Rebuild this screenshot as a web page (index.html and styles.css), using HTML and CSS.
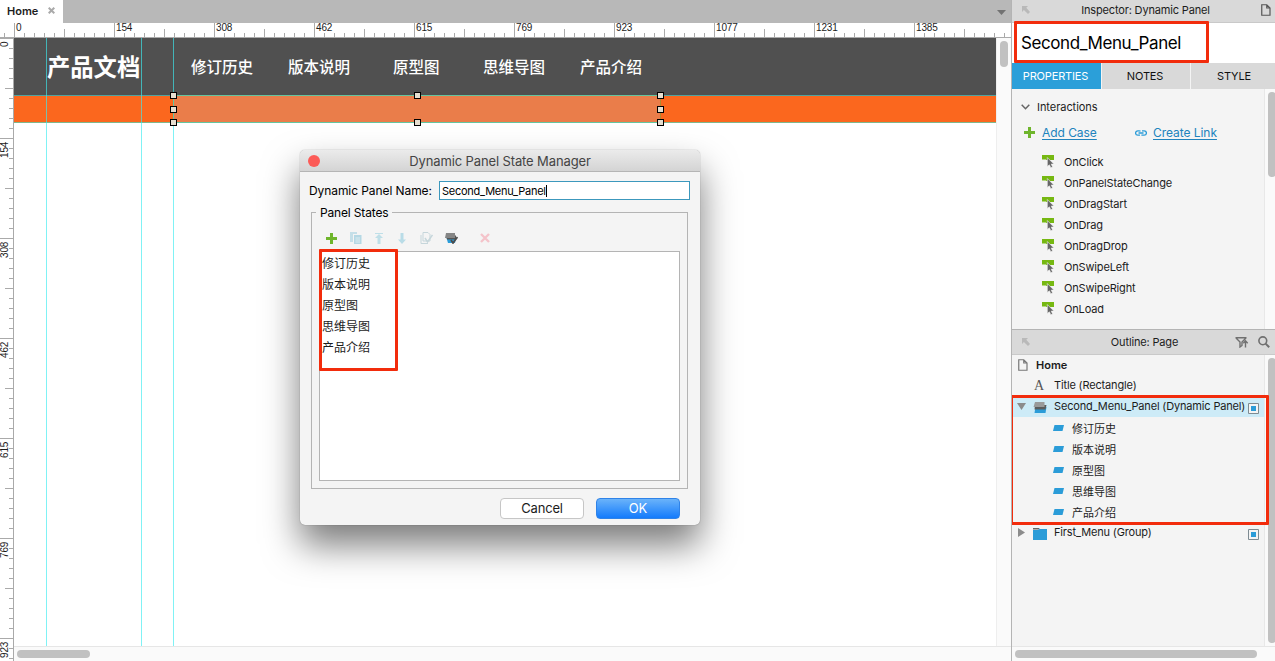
FILE: index.html
```
<!DOCTYPE html>
<html lang="zh">
<head>
    <meta charset="utf-8">
    <title>Home</title>
    <link rel="stylesheet" href="styles.css">
</head>
<body>
    <svg class="defs" width="0" height="0">
        <symbol id="icon-event" viewBox="0 0 13 13">
            <path d="M0 0h12v5H4V4.500H0z" fill="#76b812"/>
            <path d="M5.300 2.500v9l2.100-1.700 1.400 3 1.800-.8-1.400-2.900h2.700z" fill="#666" stroke="#f4f4f4" stroke-width=".6"/>
        </symbol>
        <symbol id="icon-corner" viewBox="0 0 8 8">
            <path d="M0 0h6L4.300 1.700 8 6 6 8 1.900 4 0 6z" fill="#b9b9b9"/>
        </symbol>
        <symbol id="icon-plus" viewBox="0 0 11 11">
            <path d="M4 0h3v4h4v3H7v4H4V7H0V4h4z" fill="#6fb52c"/>
        </symbol>
        <symbol id="icon-state" viewBox="0 0 11 6">
            <path d="M1.500 0H11L9.500 6H0z" fill="#2b9cd8"/>
        </symbol>
        <symbol id="icon-visible" viewBox="0 0 11 11">
            <path d="M.5.5h10v10H.5z" fill="#f4f4f4" stroke="#7e8b92"/>
            <path d="M3 3h5v5H3z" fill="#2b9cd8"/>
        </symbol>
        <symbol id="icon-page" viewBox="0 0 10 12">
            <path d="M.75.75h5L9 4v7.250H.75zM5.750.75V4H9" fill="none" stroke="currentColor" stroke-width="1.200"/>
        </symbol>
    </svg>

    <div class="app">
        <div class="editor">
            <div class="tabbar">
                <div class="tab">Home
                    <svg width="7" height="7" viewBox="0 0 7 7"><path d="M.7.7l5.600 5.600M6.300.7L.7 6.300" stroke="#aaa" stroke-width="2"/></svg>
                </div>
                <svg class="tab-menu" width="9" height="5" viewBox="0 0 9 5"><path d="M0 0h9L4.500 5z" fill="#727272"/></svg>
            </div>
            <div class="ruler-x">
                <span>0</span><span>154</span><span>308</span><span>462</span><span>615</span><span>769</span><span>923</span><span>1077</span><span>1231</span><span>1385</span>
            </div>
            <div class="workspace">
                <div class="ruler-y">
                    <span>0</span><span>154</span><span>308</span><span>462</span><span>615</span><span>769</span><span class="last">923</span>
                </div>
                <div class="view">
                    <div class="canvas">
                        <div class="site-header">
                            <div class="site-title">产品文档</div>
                            <div class="site-item item-history">修订历史</div>
                            <div class="site-item item-version">版本说明</div>
                            <div class="site-item item-proto">原型图</div>
                            <div class="site-item item-mind">思维导图</div>
                            <div class="site-item item-intro">产品介绍</div>
                        </div>
                        <div class="submenu"></div>
                        <div class="selection">
                            <i class="handle nw"></i><i class="handle n"></i><i class="handle ne"></i>
                            <i class="handle w"></i><i class="handle e"></i>
                            <i class="handle sw"></i><i class="handle s"></i><i class="handle se"></i>
                        </div>
                        <div class="guide guide-a"></div>
                        <div class="guide guide-b"></div>
                        <div class="guide guide-c"></div>
                    </div>
                    <div class="scroll-y"><div class="thumb"></div></div>
                    <div class="scroll-x"><div class="thumb"></div></div>
                </div>
            </div>
        </div>

        <div class="sidebar">
            <div class="pane-head inspector-head">
                <svg class="corner" width="8" height="8"><use href="#icon-corner"/></svg>
                <span class="pane-title">Inspector: Dynamic Panel</span>
                <svg class="head-page" width="10" height="12"><use href="#icon-page"/></svg>
            </div>
            <div class="widget-name">Second_Menu_Panel
                <div class="mark mark-name"></div>
            </div>
            <div class="tabs">
                <div class="tabs-item active">PROPERTIES</div>
                <div class="tabs-item">NOTES</div>
                <div class="tabs-item">STYLE</div>
            </div>
            <div class="properties">
                <div class="properties-body">
                    <div class="section-title">
                        <svg width="9" height="6" viewBox="0 0 9 6"><path d="M.7.7l3.800 4 3.800-4" fill="none" stroke="#666" stroke-width="1.500"/></svg>
                        <span>Interactions</span>
                    </div>
                    <div class="links">
                        <svg width="11" height="11"><use href="#icon-plus"/></svg>
                        <a class="add-case">Add Case</a>
                        <svg width="12" height="6" viewBox="0 0 12 6"><path d="M5.500 1.200A2 2 0 0 0 4 .8H2.800a2.200 2.200 0 0 0 0 4.400H5M6.500 4.800a2 2 0 0 0 1.500.4h1.200a2.200 2.200 0 0 0 0-4.400H7M3.500 3h5" fill="none" stroke="#2b9cd8" stroke-width="1.300"/></svg>
                        <a class="create-link">Create Link</a>
                    </div>
                    <ul class="events">
                        <li><svg width="13" height="13"><use href="#icon-event"/></svg>OnClick</li>
                        <li><svg width="13" height="13"><use href="#icon-event"/></svg>OnPanelStateChange</li>
                        <li><svg width="13" height="13"><use href="#icon-event"/></svg>OnDragStart</li>
                        <li><svg width="13" height="13"><use href="#icon-event"/></svg>OnDrag</li>
                        <li><svg width="13" height="13"><use href="#icon-event"/></svg>OnDragDrop</li>
                        <li><svg width="13" height="13"><use href="#icon-event"/></svg>OnSwipeLeft</li>
                        <li><svg width="13" height="13"><use href="#icon-event"/></svg>OnSwipeRight</li>
                        <li><svg width="13" height="13"><use href="#icon-event"/></svg>OnLoad</li>
                    </ul>
                </div>
                <div class="side-scroll"><div class="thumb thumb-props"></div></div>
            </div>
            <div class="pane-head outline-head">
                <svg class="corner" width="8" height="8"><use href="#icon-corner"/></svg>
                <span class="pane-title">Outline: Page</span>
                <svg class="head-filter" width="14" height="11" viewBox="0 0 14 11"><path d="M.5.7h11M1 1l4 4v5l2-1.500V5l4-4M10.500 10.500V4M8.300 6.200l2.200-2.400 2.200 2.400" fill="none" stroke="#707070" stroke-width="1.400"/></svg>
                <svg class="head-search" width="12" height="12" viewBox="0 0 12 12"><circle cx="4.800" cy="4.800" r="3.900" fill="none" stroke="#707070" stroke-width="1.600"/><path d="M7.600 7.600l3.600 3.600" stroke="#707070" stroke-width="2"/></svg>
            </div>
            <div class="outline">
                <div class="tree">
                    <div class="row row-home"><svg class="page" width="10" height="12"><use href="#icon-page"/></svg>Home</div>
                    <div class="row row-title"><span class="letter">A</span>Title (Rectangle)</div>
                    <div class="row row-widget selected">
                        <svg class="arrow" width="9" height="7" viewBox="0 0 9 7"><path d="M0 0h9L4.500 7z" fill="#8b8b8b"/></svg>
                        <svg class="kind" width="13" height="11" viewBox="0 0 13 11"><path d="M2 5h11l-1 6H1z" fill="#2b9cd8"/><path d="M1.500 3H13l-1 4.500H1z" fill="#5c5c5c"/><path d="M1.500 0H11v5H0z" fill="#9a9a9a"/></svg>
                        <span class="label">Second_Menu_Panel (Dynamic Panel)</span>
                        <svg class="eye" width="11" height="11"><use href="#icon-visible"/></svg>
                    </div>
                    <div class="row row-state"><svg width="11" height="6"><use href="#icon-state"/></svg>修订历史</div>
                    <div class="row row-state"><svg width="11" height="6"><use href="#icon-state"/></svg>版本说明</div>
                    <div class="row row-state"><svg width="11" height="6"><use href="#icon-state"/></svg>原型图</div>
                    <div class="row row-state"><svg width="11" height="6"><use href="#icon-state"/></svg>思维导图</div>
                    <div class="row row-state"><svg width="11" height="6"><use href="#icon-state"/></svg>产品介绍</div>
                    <div class="row row-widget">
                        <svg class="arrow" width="9" height="9" viewBox="0 0 9 9"><path d="M1 0l7 4.500L1 9z" fill="#8b8b8b"/></svg>
                        <svg class="kind" width="14" height="12" viewBox="0 0 14 12"><path d="M0 0h6l1 1.500H0z" fill="#666"/><path d="M0 2h5l1.500-1H14v11H0z" fill="#2b9cd8"/></svg>
                        <span class="label">First_Menu (Group)</span>
                        <svg class="eye" width="11" height="11"><use href="#icon-visible"/></svg>
                    </div>
                </div>
                <div class="side-scroll"><div class="thumb thumb-outline"></div></div>
                <div class="mark mark-tree"></div>
            </div>
            <div class="scroll-x side-scroll-x"><div class="thumb"></div></div>
        </div>
    </div>

    <!-- State manager window -->
    <div class="dialog">
        <div class="dialog-title"><i class="close"></i><span>Dynamic Panel State Manager</span></div>
        <div class="dialog-body">
            <div class="name-row">
                <label>Dynamic Panel Name:</label>
                <div class="name-input">Second_Menu_Panel<i class="caret"></i></div>
            </div>
            <div class="group">
                <span class="legend">Panel States</span>
                <div class="toolbar">
                    <svg width="11" height="11"><use href="#icon-plus"/></svg>
                    <svg width="12" height="12" viewBox="0 0 12 12"><path d="M0 0h7v2H3v8H0z" fill="#c5dfe8"/><path d="M4 3h7.500v9H4z" fill="#b5d8e4"/><path d="M5.500 6h4.500M5.500 8h4.500M5.500 10h4.500" stroke="#deedf1"/></svg>
                    <svg width="10" height="11" viewBox="0 0 10 11"><path d="M1 0h8v1H1zM5 1l4 4H6.500v6h-3V5H1z" fill="#bfdfe8"/></svg>
                    <svg width="10" height="11" viewBox="0 0 10 11"><path d="M5 11L1 6.500h2.500V0h3v6.500H9z" fill="#b9dce7"/></svg>
                    <svg width="13" height="12" viewBox="0 0 13 12"><path d="M3 .5h5l2 2V9H3zM1 3v8.500h7" fill="none" stroke="#c6d6db"/><path d="M5 6l2.500 4L12.500 3" fill="none" stroke="#c6d6db" stroke-width="1.500"/></svg>
                    <svg width="13" height="11" viewBox="0 0 13 11"><path d="M1.500 5H11l-1 5H3z" fill="#2b9cd8"/><path d="M1 2.500h10v4H2z" fill="#555"/><path d="M1 0h9v5H0z" fill="#858585"/><path d="M6 7l2 3 4.500-6" fill="none" stroke="#4c4c4c" stroke-width="1.800"/></svg>
                    <svg width="10" height="10" viewBox="0 0 10 10"><path d="M1 1l8 8M9 1L1 9" stroke="#f4c3ca" stroke-width="2.400"/></svg>
                </div>
                <ul class="states">
                    <li>修订历史</li>
                    <li>版本说明</li>
                    <li>原型图</li>
                    <li>思维导图</li>
                    <li>产品介绍</li>
                </ul>
                <div class="mark mark-states"></div>
            </div>
            <div class="buttons">
                <div class="btn">Cancel</div>
                <div class="btn btn-ok">OK</div>
            </div>
        </div>
    </div>
</body>
</html>
```
FILE: styles.css
```
* {
    box-sizing: border-box;
}

body {
    margin: 0;
    height: 661px;
    overflow: hidden;
    position: relative;
    font-family: Inter, "Noto Sans CJK SC", sans-serif;
    font-size: 11px;
    letter-spacing: -.16px;
    color: #1c1c1c;
    background: #fff;
    white-space: nowrap;
}

svg {
    display: block;
    flex: none;
}

ul {
    list-style: none;
    margin: 0;
    padding: 0;
}

.defs {
    position: absolute;
}

.app {
    display: flex;
    height: 661px;
}

/* editor */
.editor {
    width: 1011px;
    display: flex;
    flex-direction: column;
}

.tabbar {
    height: 23px;
    background: #b8b8b8;
    display: flex;
    justify-content: space-between;
}

.tab {
    width: 63px;
    background: #fff;
    padding: 0 0 2px 7px;
    display: flex;
    align-items: center;
    gap: 10px;
    font-weight: 600;
    font-size: 11px;
    letter-spacing: 0;
}

.tab-menu {
    margin: 10px 5px 0 0;
}

.ruler-x {
    height: 15px;
    padding-left: 14px;
    display: flex;
    overflow: hidden;
    border-bottom: 1px solid #aaa;
    font: 10px/10px "Liberation Sans", sans-serif;
    background-image: linear-gradient(90deg, #aaa 1px, transparent 1px), linear-gradient(90deg, #aaa 1px, transparent 1px), linear-gradient(90deg, #aaa 1px, transparent 1px);
    background-size: 100px 14px, 50px 8px, 10px 4px;
    background-position: 14px 0, 14px 6px, 14px 10px;
    background-repeat: repeat-x;
}

.ruler-x span {
    width: 100px;
    flex: none;
    padding-left: 2px;
}

.workspace {
    height: 623px;
    display: flex;
}

.ruler-y {
    width: 14px;
    border-right: 1px solid #aaa;
    overflow: hidden;
    font: 10px/9px "Liberation Sans", sans-serif;
    background-image: linear-gradient(#aaa 1px, transparent 1px), linear-gradient(#aaa 1px, transparent 1px), linear-gradient(#aaa 1px, transparent 1px);
    background-size: 13px 100px, 8px 50px, 4px 10px;
    background-position: 0 0, 5px 0, 9px 0;
    background-repeat: repeat-y;
}

.ruler-y span {
    display: block;
    height: 100px;
    width: 9px;
    padding-bottom: 4px;
    text-align: right;
    writing-mode: vertical-rl;
    transform: rotate(180deg);
}

.ruler-y .last {
    height: 23px;
}

.view {
    width: 997px;
    display: grid;
    grid-template-columns: 982px 15px;
    grid-template-rows: 608px 15px;
}

.canvas {
    position: relative;
}

.site-header {
    height: 57px;
    background: #505050;
    color: #fff;
    display: flex;
    align-items: center;
    padding: 0 0 1px 33px;
    font-family: "Noto Sans CJK SC", sans-serif;
    letter-spacing: 0;
}

.site-title {
    width: 144px;
    font-size: 23.300px;
    line-height: 34px;
    font-weight: 700;
}

.site-item {
    font-size: 15.500px;
    font-weight: 500;
}

.item-history {
    width: 97px;
}

.item-version {
    width: 105px;
}

.item-proto {
    width: 90px;
}

.item-mind {
    width: 97px;
}

.submenu {
    height: 28px;
    background: #fb671e;
    border-top: 1px solid #4fa3a0;
    border-bottom: 1px solid #7fb78d;
}

.guide {
    position: absolute;
    top: 0;
    bottom: 0;
    width: 1px;
    background: rgba(60, 235, 240, .65);
}

.guide-a {
    left: 32px;
}

.guide-b {
    left: 127px;
}

.guide-c {
    left: 159px;
    bottom: 0;
    z-index: 0;
}

.selection {
    position: absolute;
    z-index: 1;
    left: 159px;
    top: 57px;
    width: 488px;
    height: 28px;
    background: #ea7d4a;
    border: 1px solid #64c5a0;
    border-right-color: #b08a30;
}

.handle {
    position: absolute;
    width: 7px;
    height: 7px;
    border: 1px solid #000;
    background: #e6ded0;
}

.nw, .n, .ne {
    top: -4px;
}

.w, .e {
    top: 10px;
}

.sw, .s, .se {
    top: 23px;
}

.nw, .w, .sw {
    left: -4px;
}

.n, .s {
    left: 240px;
}

.ne, .e, .se {
    right: -4px;
}

.scroll-y {
    background: #fafafa;
    border-left: 1px solid #eee;
    padding: 3px 0 0 3px;
}

.thumb {
    background: #c1c1c1;
    border-radius: 4px;
}

.scroll-y .thumb {
    width: 8px;
    height: 26px;
}

.scroll-x {
    grid-column: 1 / 3;
    height: 15px;
    background: #fafafa;
    border-top: 1px solid #e6e6e6;
    padding: 3px 0 0 3px;
}

.scroll-x .thumb {
    width: 73px;
    height: 8px;
}

/* sidebar */
.sidebar {
    flex: 1;
    border-left: 1px solid #b4b4b4;
    background: #f4f4f4;
    overflow: hidden;
}

.pane-head {
    background: #d9d9d9;
    display: flex;
    align-items: center;
    border-bottom: 1px solid #c9c9c9;
}

.inspector-head {
    height: 23px;
    padding: 0 4px 2px 10px;
}

.pane-title {
    flex: 1;
    text-align: center;
}

.head-page {
    color: #555;
}

.widget-name {
    position: relative;
    height: 40px;
    padding-left: 9px;
    background: #fff;
    color: #000;
    font-size: 17px;
    line-height: 40px;
    letter-spacing: -.42px;
}

.mark {
    position: absolute;
    z-index: 1;
    border: 3px solid #f22c0c;
    border-radius: 1px;
}

.mark-name {
    left: 2px;
    top: -2px;
    width: 195px;
    height: 42px;
}

.tabs {
    display: flex;
    height: 26px;
    gap: 1px;
    background: #f4f4f4;
}

.tabs-item {
    width: 88px;
    flex: none;
    background: #d9d9d9;
    display: flex;
    align-items: center;
    justify-content: center;
    padding-right: 2px;
    color: #111;
}

.tabs-item.active {
    width: 89px;
    background: #2b9fd9;
    color: #fff;
}

.properties {
    height: 241px;
    display: flex;
    border-bottom: 1px solid #b4b4b4;
}

.properties-body {
    flex: 1;
}

.side-scroll {
    width: 11px;
    flex: none;
    background: #fafafa;
    border-left: 1px solid #e8e8e8;
    padding-left: 3px;
    overflow: hidden;
}

.side-scroll .thumb {
    width: 8px;
}

.thumb-props {
    height: 85px;
    margin-top: 3px;
}

.section-title {
    height: 36px;
    padding-left: 9px;
    display: flex;
    align-items: center;
    gap: 7px;
    letter-spacing: -.05px;
}

.links {
    height: 15px;
    padding-left: 12px;
    display: flex;
    align-items: center;
    font-size: 12px;
    letter-spacing: -.05px;
}

.links a {
    color: #2083bd;
    text-decoration: underline;
    text-underline-offset: 2px;
}

.add-case {
    width: 93px;
    margin-left: 7px;
}

.create-link {
    margin-left: 6px;
}

.events {
    padding-top: 11px;
}

.events li {
    height: 21px;
    padding-left: 30px;
    display: flex;
    align-items: center;
    gap: 9px;
}

.outline-head {
    height: 25px;
    padding: 0 5px 0 10px;
}

.outline-head .pane-title {
    padding-left: 24px;
}

.head-filter {
    margin-right: 9px;
}

.outline {
    position: relative;
    height: 291px;
    display: flex;
}

.tree {
    flex: 1;
}

.row {
    height: 21px;
    display: flex;
    align-items: center;
}

.row-home {
    height: 20px;
    padding: 0 0 1px 6px;
    gap: 8px;
    font-weight: 600;
    letter-spacing: 0;
}

.row-home .page {
    color: #777;
}

.row-title {
    padding: 0 0 2px 22px;
}

.letter {
    width: 20px;
    padding-top: 2px;
    color: #555;
    font: 14px "Liberation Serif", serif;
}

.row-widget {
    padding-left: 5px;
}

.row-widget .kind {
    width: 14px;
    margin: 2px 7px 0;
}

.row-widget .label {
    margin-top: -2px;
}

.row-widget .eye {
    margin: 4px 5px 0 auto;
}

.selected {
    background: #cdebf7;
}

.row-state {
    padding-left: 41px;
    gap: 8px;
    letter-spacing: 0;
}

.thumb-outline {
    height: 285px;
    margin-top: 3px;
}

.mark-tree {
    left: -2px;
    top: 40px;
    width: 259px;
    height: 130px;
}

.side-scroll-x .thumb {
    width: 242px;
}

/* dialog */
.dialog {
    position: absolute;
    left: 300px;
    top: 150px;
    width: 400px;
    height: 375px;
    border-radius: 5px;
    background: #f4f4f4;
    box-shadow: 0 0 1px rgba(0, 0, 0, .5), 0 20px 36px rgba(0, 0, 0, .52);
}

.dialog-title {
    height: 22px;
    padding-left: 8px;
    display: flex;
    align-items: center;
    border-radius: 5px 5px 0 0;
    border-bottom: 1px solid #b5b5b5;
    background: linear-gradient(#ebebeb, #d4d4d4);
    font-size: 13px;
    letter-spacing: -.12px;
    color: #444;
}

.dialog-title span {
    flex: 1;
    text-align: center;
    padding-right: 20px;
}

.close {
    width: 12px;
    height: 12px;
    border-radius: 50%;
    background: #fc5b57;
}

.dialog-body {
    padding: 9px 10px 0 9px;
}

.name-row {
    display: flex;
    justify-content: space-between;
    align-items: center;
    font-size: 12px;
    letter-spacing: -.08px;
    color: #000;
}

.name-input {
    width: 251px;
    height: 19px;
    padding-left: 2px;
    display: flex;
    align-items: center;
    background: #fff;
    border: 1px solid #3c98bd;
    font-size: 11px;
    letter-spacing: -.26px;
    color: #000;
}

.caret {
    width: 1px;
    height: 12px;
    background: #000;
}

.group {
    position: relative;
    width: 377px;
    height: 277px;
    margin: 12px 0 0 2px;
    padding: 19px 7px 7px;
    border: 1px solid #b4b4b4;
}

.legend {
    position: absolute;
    left: 4px;
    top: -8px;
    padding: 0 4px;
    background: #f4f4f4;
    font-size: 12px;
    line-height: 15px;
    color: #000;
}

.toolbar {
    height: 19px;
    padding: 0 0 7px 7px;
    display: flex;
    align-items: center;
    gap: 12.700px;
}

.toolbar svg:last-child {
    margin-left: 9px;
}

.states {
    height: 230px;
    background: #fff;
    border: 1px solid #b4b4b4;
    padding: 1px 2px;
    font-size: 12px;
    letter-spacing: 0;
}

.states li {
    height: 21px;
    line-height: 21px;
}

.mark-states {
    left: 7px;
    top: 36px;
    width: 79px;
    height: 122px;
}

.buttons {
    display: flex;
    justify-content: flex-end;
    gap: 12px;
    padding: 9px 10px 0 0;
}

.btn {
    width: 84px;
    height: 21px;
    padding-bottom: 1px;
    display: flex;
    align-items: center;
    justify-content: center;
    background: #fff;
    border: 1px solid #c6c6c6;
    border-radius: 4px;
    font-size: 13px;
}

.btn-ok {
    color: #fff;
    border-color: #2f83e8;
    background: linear-gradient(#6ab3fa, #147bfc);
}
```
